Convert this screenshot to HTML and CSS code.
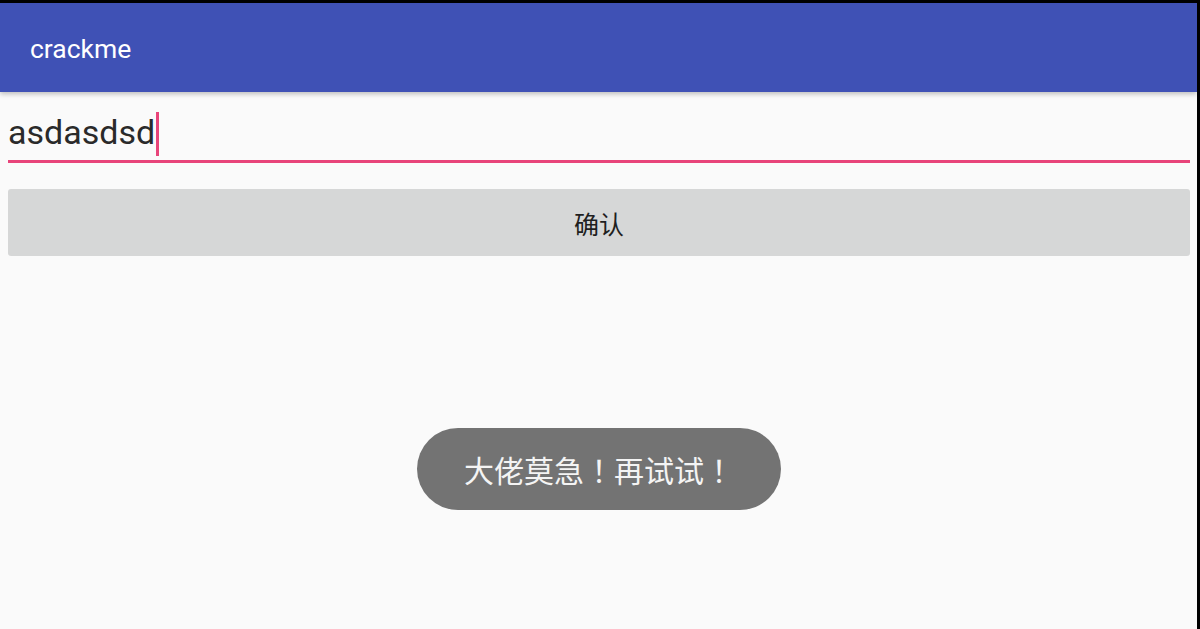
FILE: index.html
```html
<!DOCTYPE html>
<html lang="zh-CN">
<head>
    <meta charset="UTF-8">
    <meta name="viewport" content="width=device-width, initial-scale=1.0">
    <title>crackme</title>
    <link rel="stylesheet" href="styles.css">
</head>
<body>

<div class="screen">
    <div class="app-bar">
        <span class="app-title">crackme</span>
    </div>

    <div class="content">
        <div class="field">
            <span class="field-text">asdasdsd</span><span class="cursor"></span>
        </div>
        <button class="confirm">确认</button>
    </div>

    <div class="toast">大佬莫急<span class="mark" lang="ja">！</span>再试试<span class="mark" lang="ja">！</span></div>
</div>

</body>
</html>
```

FILE: styles.css
```css
html, body {
    margin: 0;
    height: 100%;
}
body {
    background: #000;
    padding: 3px 3px 0 0;
    box-sizing: border-box;
    font-family: Roboto, "Noto Sans CJK SC", sans-serif;
}
.screen {
    position: relative;
    height: 100%;
    background: #fafafa;
    overflow: hidden;
}
.app-bar {
    height: 89px;
    background: #3f51b5;
    display: flex;
    align-items: center;
    padding-left: 30px;
    box-shadow: 0 2px 5px rgba(0, 0, 0, 0.25);
}
.app-title {
    color: #fff;
    font-size: 26.5px;
    margin-top: 2px;
}
.content {
    padding: 0 7px 0 8px;
}
.field {
    display: flex;
    align-items: flex-end;
    height: 71px;
    border-bottom: 3px solid #e8447a;
    box-sizing: border-box;
    padding-bottom: 4px;
}
.field-text {
    font-size: 34px;
    color: #2a2a2a;
    line-height: 1;
    padding-bottom: 7px;
}
.cursor {
    width: 3px;
    height: 44px;
    margin-left: 1px;
    background: #e8447a;
}
.confirm {
    display: block;
    width: 100%;
    height: 67px;
    margin-top: 26px;
    border: none;
    border-radius: 3px;
    background: #d6d7d7;
    color: #1f1f1f;
    font-family: "Noto Sans CJK SC", sans-serif;
    font-size: 25px;
    padding: 0;
}
.toast {
    position: absolute;
    left: 417px;
    top: 425px;
    width: 364px;
    height: 82px;
    border-radius: 41px;
    background: #737373;
    color: #f4f4f4;
    font-family: "Noto Sans CJK SC", sans-serif;
    font-size: 30px;
    text-spacing-trim: space-all;
    display: flex;
    align-items: center;
    justify-content: center;
}
.mark {
    font-family: "Noto Sans CJK JP", sans-serif;
}
```
